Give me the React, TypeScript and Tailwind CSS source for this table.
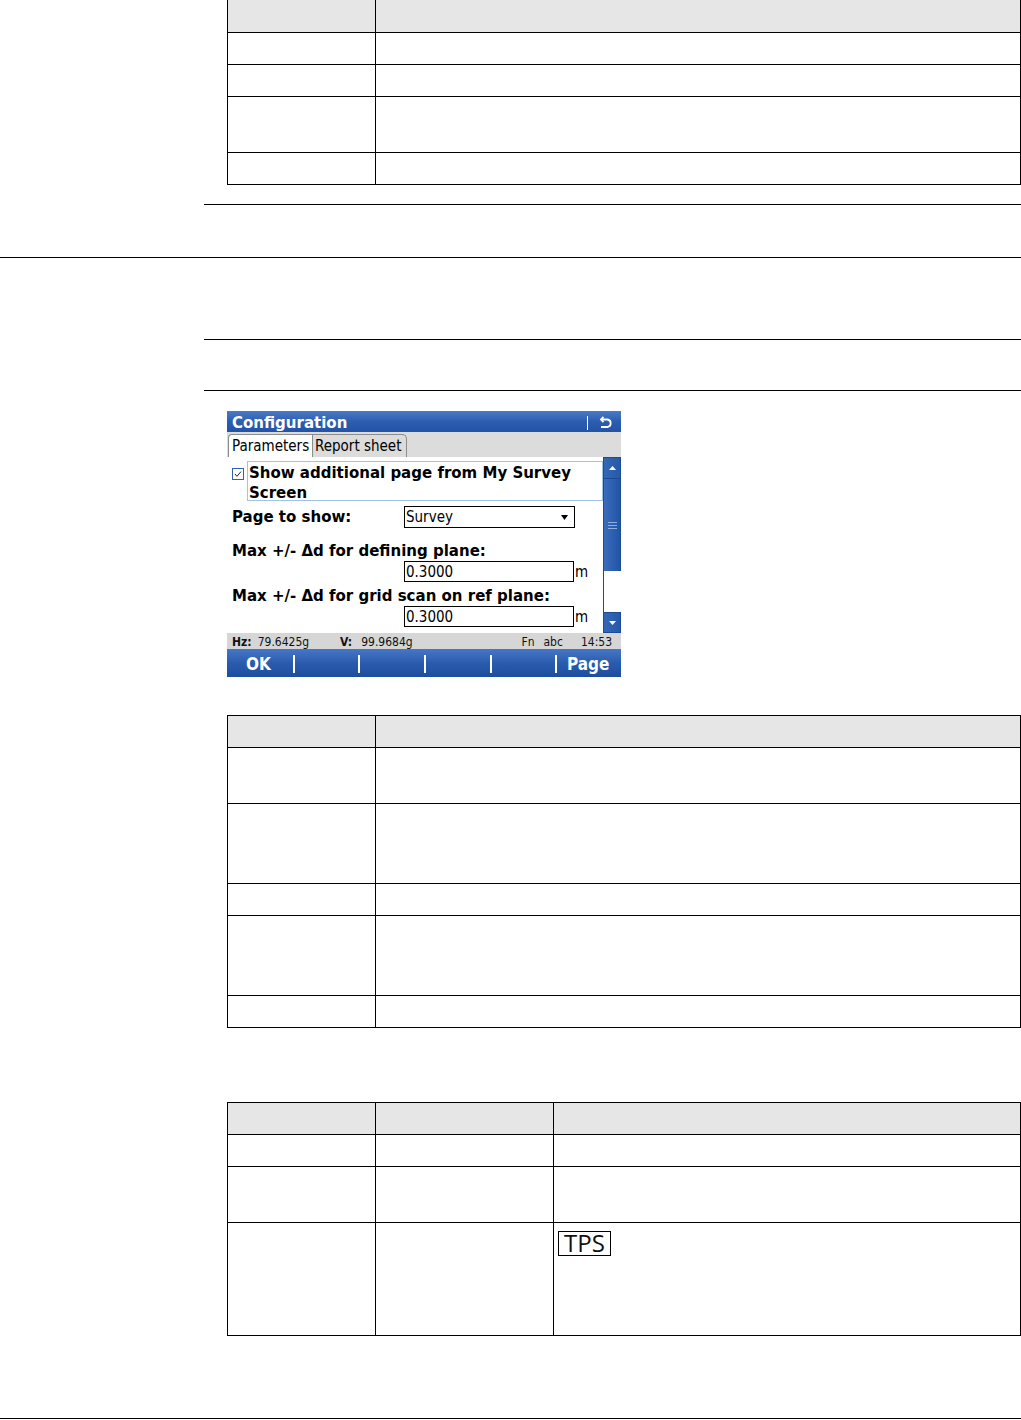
import React from "react";

const B = "border-black";

function Row({ h, cols, header }: { h: number; cols: number[]; header?: boolean }) {
  return (
    <div
      className={`flex border-b ${B} ${header ? "bg-[#e6e6e6]" : "bg-white"}`}
      style={{ height: h }}
    >
      {cols.map((w, i) => (
        <div key={i} className={`border-r ${B} shrink-0`} style={{ width: w }} />
      ))}
      <div className="flex-1" />
    </div>
  );
}

function Table({
  top,
  heights,
  cols,
  children,
}: {
  top: boolean;
  heights: number[];
  cols: number[];
  children?: React.ReactNode;
}) {
  return (
    <div className={`relative ml-[227px] w-[794px] border-l border-r ${B} ${top ? "border-t" : ""}`}>
      {heights.map((h, i) => (
        <Row key={i} h={h} cols={cols} header={i === 0} />
      ))}
      {children}
    </div>
  );
}

const dev = { fontFamily: "'DejaVu Sans Condensed', 'DejaVu Sans', sans-serif" };
const wide = { fontFamily: "'DejaVu Sans', sans-serif" };

function ReturnIcon() {
  return (
    <svg width="14" height="13" viewBox="0 0 14 13" fill="none" stroke="white" strokeWidth="1.8">
      <path d="M2 3.5 H8.5 A3.8 3.8 0 0 1 8.5 11 H2" />
      <path d="M4.5 1 L2 3.5 L4.5 6" />
    </svg>
  );
}

function Device() {
  return (
    <div className="ml-[227px] mt-[20px] w-[394px] h-[266px] flex flex-col" style={dev}>
      {/* title */}
      <div className="h-[21px] flex items-center bg-linear-to-b from-[#4a7bc9] via-[#2c5eb0] to-[#2253a6] text-white">
        <span className="pl-[5px] pt-[3px] text-[15px] font-bold leading-none" style={wide}>
          Configuration
        </span>
        <div className="ml-auto mr-[11px] mt-[2px] w-px h-[14px] bg-white" />
        <div className="mr-[8px] mt-[2px]">
          <ReturnIcon />
        </div>
      </div>
      {/* tabs */}
      <div className="h-[25px] bg-[#dcdcdc] flex items-end pl-[1px]">
        <div className="h-[23px] w-[85px] bg-white border border-b-0 border-[#8c8c8c] rounded-tl-[4px] pl-[3px] text-[15px] leading-[23px] text-black">
          Parameters
        </div>
        <div className="h-[23px] w-[94px] bg-[#dcdcdc] border border-l-0 border-b-0 border-[#8c8c8c] rounded-tr-[5px] pl-[2px] text-[15px] leading-[23px] text-black">
          Report sheet
        </div>
      </div>
      {/* content */}
      <div className="h-[176px] flex bg-white">
        <div className="w-[376px] flex flex-col text-black">
          <div className="flex pt-[4px]">
            <div className="w-[20px] pl-[5px] pt-[7px]">
              <svg width="12" height="12" viewBox="0 0 12 12">
                <rect x="0.5" y="0.5" width="11" height="11" fill="white" stroke="#2f63b0" />
                <path d="M3 6 L5 8.3 L9 3.6" fill="none" stroke="#222" strokeWidth="1" />
              </svg>
            </div>
            <div
              className="flex-1 h-[40px] border border-[#9fc4e6] pl-[1px] pt-[1px] text-[15px] font-bold leading-[20px]"
              style={wide}
            >
              Show additional page from My Survey
              <br />
              Screen
            </div>
          </div>
          <div className="flex items-center mt-[5px] h-[22px]">
            <span className="pl-[5px] w-[177px] pt-[1px] text-[15px] font-bold" style={wide}>
              Page to show:
            </span>
            <div className="w-[171px] h-[22px] border border-black flex items-center pl-[1px] pt-[1px] text-[15px]">
              <span>Survey</span>
              <svg className="ml-auto mr-[6px]" width="7" height="5" viewBox="0 0 7 5">
                <path d="M0 0 H7 L3.5 5 Z" fill="black" />
              </svg>
            </div>
          </div>
          <div className="mt-[13px] pl-[5px] h-[20px] leading-[20px] text-[15px] font-bold" style={wide}>
            Max +/- Δd for defining plane:
          </div>
          <div className="mt-[0px] flex h-[21px] items-center">
            <div className="ml-[177px] w-[170px] h-[21px] border border-black pl-[1px] pt-[1px] text-[15px] leading-[19px]">
              0.3000
            </div>
            <span className="text-[15px] pl-[1px] pt-[2px]">m</span>
          </div>
          <div className="mt-[4px] pl-[5px] h-[20px] leading-[20px] text-[15px] font-bold" style={wide}>
            Max +/- Δd for grid scan on ref plane:
          </div>
          <div className="mt-[0px] flex h-[21px] items-center">
            <div className="ml-[177px] w-[170px] h-[21px] border border-black pl-[1px] pt-[1px] text-[15px] leading-[19px]">
              0.3000
            </div>
            <span className="text-[15px] pl-[1px] pt-[2px]">m</span>
          </div>
        </div>
        {/* scrollbar */}
        <div className="w-[18px] flex flex-col">
          <div className="h-[22px] bg-linear-to-r from-[#3467b6] to-[#2659a9] border border-[#1c4b96] flex items-center justify-center">
            <svg width="7" height="4" viewBox="0 0 7 4">
              <path d="M0 4 H7 L3.5 0 Z" fill="white" />
            </svg>
          </div>
          <div className="h-[92px] bg-linear-to-r from-[#3a6dbc] via-[#2d60b0] to-[#2255a5] border-x border-[#1c4b96] flex flex-col items-center justify-center gap-[2px]">
            <div className="w-[9px] h-px bg-[#8fb0de]" />
            <div className="w-[9px] h-px bg-[#8fb0de]" />
            <div className="w-[9px] h-px bg-[#8fb0de]" />
          </div>
          <div className="h-[41px] bg-white border-l border-[#1c4b96]" />
          <div className="h-[21px] bg-linear-to-r from-[#3467b6] to-[#2659a9] border border-[#1c4b96] flex items-center justify-center">
            <svg width="7" height="4" viewBox="0 0 7 4">
              <path d="M0 0 H7 L3.5 4 Z" fill="white" />
            </svg>
          </div>
        </div>
      </div>
      {/* status */}
      <div className="h-[16px] bg-[#d6d6d6] flex items-center pt-[2px] text-[12px] leading-none text-[#111] pl-[5px] pr-[9px]">
        <span className="w-[108px] flex">
          <span className="font-bold">Hz:</span>
          <span className="ml-[6px]">79.6425g</span>
        </span>
        <span className="flex">
          <span className="font-bold">V:</span>
          <span className="ml-[9px]">99.9684g</span>
        </span>
        <span className="ml-auto">Fn</span>
        <span className="ml-[9px]">abc</span>
        <span className="ml-[18px]">14:53</span>
      </div>
      {/* softkeys */}
      <div className="h-[28px] grid grid-cols-6 bg-linear-to-b from-[#4677c6] via-[#2a5cae] to-[#1d4d9f] text-white text-[17px] font-bold">
        {["OK", "", "", "", "", "Page"].map((t, i) => (
          <div key={i} className="relative flex items-center justify-center pt-[3px]">
            {i > 0 && <div className="absolute left-0 top-[6px] w-[2px] h-[18px] bg-white" />}
            <span className={`leading-none ${i === 0 ? "-ml-[3px]" : ""}`}>{t}</span>
          </div>
        ))}
      </div>
    </div>
  );
}

export default function App() {
  return (
    <div className="w-[1021px] h-[1420px] bg-white overflow-hidden flex flex-col">
      <Table top={false} heights={[33, 32, 32, 56, 32]} cols={[148]} />
      <div className="mt-[19px] ml-[204px] h-px bg-black" />
      <div className="mt-[52px] h-px bg-black" />
      <div className="mt-[81px] ml-[204px] h-px bg-black" />
      <div className="mt-[50px] ml-[204px] h-px bg-black" />
      <Device />
      <div className="mt-[38px]">
        <Table top heights={[32, 56, 80, 32, 80, 32]} cols={[148]} />
      </div>
      <div className="mt-[74px]">
        <Table top heights={[32, 32, 56, 113]} cols={[148, 178]}>
          <div
            className="absolute left-[330px] top-[128px] h-[25px] px-[5px] border border-black flex items-center text-[24px] leading-none text-[#111]"
            style={{ fontFamily: "'Open Sans', 'Noto Sans', sans-serif" }}
          >
            <span className="-mt-[2px]">TPS</span>
          </div>
        </Table>
      </div>
      <div className="mt-[82px] h-px bg-black" />
    </div>
  );
}
